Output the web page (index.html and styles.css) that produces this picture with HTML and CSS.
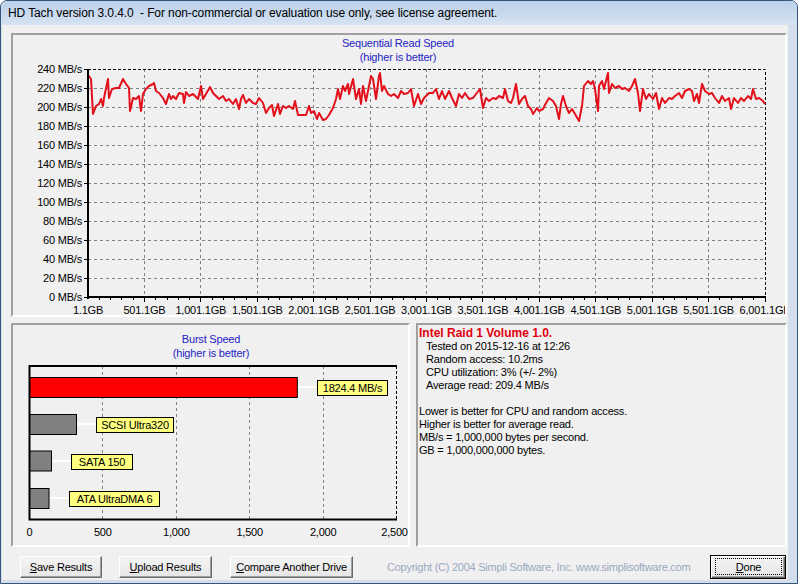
FILE: index.html
```html
<!DOCTYPE html>
<html>
<head>
<meta charset="utf-8">
<title>HD Tach</title>
<link rel="stylesheet" href="styles.css">
</head>
<body>
<div class="window">
  <div class="titlebar"><span class="title">HD Tach version 3.0.4.0&nbsp; - For non-commercial or evaluation use only, see license agreement.</span></div>
  <div class="frame">
    <div class="client">
      <div class="panel seq">
        <svg class="chart" width="772" height="280" viewBox="13 35 772 280">
          <text class="ttl" x="398" y="47" text-anchor="middle">Sequential Read Speed</text>
          <text class="ttl" x="398" y="61" text-anchor="middle">(higher is better)</text>
          <path class="grid" d="M88 88.5H765M88 107.5H765M88 126.5H765M88 145.5H765M88 164.5H765M88 183.5H765M88 202.5H765M88 221.5H765M88 240.5H765M88 259.5H765M88 278.5H765"/>
          <path class="grid" d="M144.5 69V297M200.5 69V297M257.5 69V297M313.5 69V297M370.5 69V297M426.5 69V297M482.5 69V297M539.5 69V297M595.5 69V297M652.5 69V297M708.5 69V297"/>
          <path class="edge" d="M88 69.5H765.5V297"/>
          <path class="tick" d="M84 69.5H88M84 88.5H88M84 107.5H88M84 126.5H88M84 145.5H88M84 164.5H88M84 183.5H88M84 202.5H88M84 221.5H88M84 240.5H88M84 259.5H88M84 278.5H88M84 297.5H88"/>
          <path class="tick" d="M144.5 297V302M200.5 297V302M257.5 297V302M313.5 297V302M370.5 297V302M426.5 297V302M482.5 297V302M539.5 297V302M595.5 297V302M652.5 297V302M708.5 297V302M765.5 297V302"/>
          <path class="tick" d="M99.5 297V300M110.5 297V300M121.5 297V300M133.5 297V300M155.5 297V300M167.5 297V300M178.5 297V300M189.5 297V300M212.5 297V300M223.5 297V300M234.5 297V300M246.5 297V300M268.5 297V300M279.5 297V300M291.5 297V300M302.5 297V300M325.5 297V300M336.5 297V300M347.5 297V300M358.5 297V300M381.5 297V300M392.5 297V300M403.5 297V300M415.5 297V300M437.5 297V300M449.5 297V300M460.5 297V300M471.5 297V300M494.5 297V300M505.5 297V300M516.5 297V300M528.5 297V300M550.5 297V300M561.5 297V300M573.5 297V300M584.5 297V300M607.5 297V300M618.5 297V300M629.5 297V300M640.5 297V300M663.5 297V300M674.5 297V300M686.5 297V300M697.5 297V300M719.5 297V300M731.5 297V300M742.5 297V300M753.5 297V300"/>
          <polyline class="read" points="88,75 91,79 93,114 96,106 99,104 101,99 103,106 104,98 108,79 109,98 112,89 116,88 119,88 123,79 126,84 129,88 130,111 133,98 136,99 139,96 141,111 143,94 146,89 149,86 153,84 154,83 156,91 159,93 163,98 166,104 169,94 171,99 173,96 176,99 179,93 183,94 184,103 186,92 189,96 193,94 198,99 201,86 203,99 206,94 210,87 213,93 216,96 219,99 223,96 226,101 229,99 233,104 236,99 239,109 241,99 243,95 246,103 249,99 253,103 256,104 259,98 263,103 266,113 269,108 272,105 274,116 278,104 280,114 283,106 286,108 289,106 293,109 295,101 298,115 303,115 306,115 309,106 311,113 314,111 317,119 319,113 323,120 326,119 329,115 333,108 336,99 338,89 340,99 343,86 345,91 348,84 349,94 353,79 356,99 359,89 361,104 363,86 366,101 369,86 371,76 373,79 376,99 379,76 380,73 382,91 384,86 388,94 391,96 394,94 398,98 401,91 404,94 408,93 411,89 414,106 418,94 421,104 424,98 429,93 433,93 436,89 439,99 442,91 445,99 449,91 452,98 456,106 459,94 462,98 465,93 469,99 473,98 476,94 480,89 483,108 486,98 489,101 493,98 496,99 499,96 503,98 505,89 508,101 511,103 513,98 516,84 519,104 522,99 525,96 528,106 531,109 533,114 537,108 539,111 543,109 546,103 549,98 553,101 556,106 559,119 561,104 563,96 566,106 569,113 572,109 575,114 579,121 582,106 584,86 588,81 591,84 593,81 595,89 598,111 599,86 602,81 604,89 608,73 609,93 612,84 615,88 619,86 622,89 625,88 629,91 632,86 635,79 638,93 640,111 643,89 646,99 649,94 653,99 656,93 659,109 662,98 665,103 669,98 672,99 675,96 679,93 682,98 685,91 689,89 692,91 694,101 697,94 699,103 702,84 705,91 709,94 712,93 715,98 719,103 722,96 725,101 729,98 731,109 734,98 738,103 741,98 744,101 748,96 751,99 753,89 756,99 759,98 763,101 765,104"/>
          <path class="axis" d="M88 69V299M87 297H766"/>
          <g text-anchor="end">
            <text x="82" y="73">240 MB/s</text>
            <text x="82" y="92">220 MB/s</text>
            <text x="82" y="111">200 MB/s</text>
            <text x="82" y="130">180 MB/s</text>
            <text x="82" y="149">160 MB/s</text>
            <text x="82" y="168">140 MB/s</text>
            <text x="82" y="187">120 MB/s</text>
            <text x="82" y="206">100 MB/s</text>
            <text x="82" y="225">80 MB/s</text>
            <text x="82" y="244">60 MB/s</text>
            <text x="82" y="263">40 MB/s</text>
            <text x="82" y="282">20 MB/s</text>
            <text x="82" y="301">0 MB/s</text>
          </g>
          <g text-anchor="middle">
            <text x="88" y="313.5">1.1GB</text>
            <text x="144.4" y="313.5">501.1GB</text>
            <text x="200.8" y="313.5">1,001.1GB</text>
            <text x="257.3" y="313.5">1,501.1GB</text>
            <text x="313.7" y="313.5">2,001.1GB</text>
            <text x="370.1" y="313.5">2,501.1GB</text>
            <text x="426.5" y="313.5">3,001.1GB</text>
            <text x="482.9" y="313.5">3,501.1GB</text>
            <text x="539.3" y="313.5">4,001.1GB</text>
            <text x="595.8" y="313.5">4,501.1GB</text>
            <text x="652.2" y="313.5">5,001.1GB</text>
            <text x="708.6" y="313.5">5,501.1GB</text>
            <text x="765" y="313.5">6,001.1GB</text>
          </g>
        </svg>
      </div>
      <div class="row">
        <div class="panel burst">
          <svg class="chart" width="395" height="220" viewBox="13 325 395 220">
            <text class="ttl" x="211" y="343" text-anchor="middle">Burst Speed</text>
            <text class="ttl" x="211" y="357" text-anchor="middle">(higher is better)</text>
            <path class="grid" d="M102.5 366V519M176.5 366V519M249.5 366V519M323.5 366V519"/>
            <path class="edge" d="M396.5 366V519"/>
            <path class="top" d="M29 366H397"/>
            <path class="link" d="M297 387H317M76.5 424H96.5M51.5 461H71.5M49 498H69.5"/>
            <rect class="bar-hi" x="29.5" y="377.5" width="267.8" height="20"/>
            <rect class="bar" x="29.5" y="414.5" width="47" height="20"/>
            <rect class="bar" x="29.5" y="451" width="22" height="20"/>
            <rect class="bar" x="29.5" y="488.5" width="19.5" height="20"/>
            <rect class="tag" x="317.5" y="380.5" width="70" height="15"/>
            <rect class="tag" x="96.5" y="417.5" width="77" height="15"/>
            <rect class="tag" x="71.5" y="454.5" width="61" height="15"/>
            <rect class="tag" x="69.5" y="491.5" width="90" height="15"/>
            <g text-anchor="middle">
              <text x="352.5" y="392">1824.4 MB/s</text>
              <text x="135" y="429">SCSI Ultra320</text>
              <text x="102" y="466">SATA 150</text>
              <text x="114.5" y="503">ATA UltraDMA 6</text>
            </g>
            <path class="axis" d="M29.5 365V520M28.5 519.5H397"/>
            <g text-anchor="middle">
              <text x="29.5" y="536">0</text>
              <text x="102.8" y="536">500</text>
              <text x="176.3" y="536">1,000</text>
              <text x="249.7" y="536">1,500</text>
              <text x="323.2" y="536">2,000</text>
              <text x="394.5" y="536">2,500</text>
            </g>
          </svg>
        </div>
        <div class="panel info">
          <div class="drive">Intel Raid 1 Volume 1.0.</div>
          <div class="ind">Tested on 2015-12-16 at 12:26</div>
          <div class="ind">Random access: 10.2ms</div>
          <div class="ind">CPU utilization: 3% (+/- 2%)</div>
          <div class="ind">Average read: 209.4 MB/s</div>
          <div class="blank"></div>
          <div>Lower is better for CPU and random access.</div>
          <div>Higher is better for average read.</div>
          <div>MB/s = 1,000,000 bytes per second.</div>
          <div>GB = 1,000,000,000 bytes.</div>
        </div>
      </div>
      <div class="buttons">
        <button class="btn b-save"><span><u>S</u>ave Results</span></button>
        <button class="btn b-upload"><span><u>U</u>pload Results</span></button>
        <button class="btn b-compare"><span><u>C</u>ompare Another Drive</span></button>
        <span class="copyright">Copyright (C) 2004 Simpli Software, Inc. www.simplisoftware.com</span>
        <button class="btn b-done"><span class="focus"><u>D</u>one</span></button>
      </div>
    </div>
  </div>
</div>
</body>
</html>
```
FILE: styles.css
```css
* { box-sizing: border-box; }
html, body { margin: 0; padding: 0; background: #ffffff; }

.window {
  width: 798px;
  height: 584px;
  display: flex;
  flex-direction: column;
  border: 1px solid #35557a;
  border-radius: 7px 7px 0 0;
  background: #d2deec;
  overflow: hidden;
}

.titlebar {
  height: 24px;
  flex: none;
  display: flex;
  align-items: center;
  padding-left: 7px;
  background: linear-gradient(#bad0ea, #c9daee 55%, #d6e3f2);
  font-family: "Liberation Sans", Arial, sans-serif;
  font-size: 12px;
  letter-spacing: -0.1px;
  color: #000;
  white-space: nowrap;
}

.frame {
  flex: 1;
  display: flex;
  padding: 0 9px 3px 1px;
}

.client {
  flex: 1;
  display: flex;
  flex-direction: column;
  background: #f0f0f0;
  padding: 8px 1px 0 9px;
}

.panel {
  border-style: solid;
  border-width: 2px;
  border-color: #a0a0a0 #ffffff #ffffff #a0a0a0;
  background: #f0f0f0;
}

.seq { height: 284px; flex: none; overflow: hidden; }

.chart { display: block; overflow: hidden; }
.chart text {
  font-family: "Liberation Sans", Arial, sans-serif;
  font-size: 11px;
  letter-spacing: -0.2px;
  fill: #000;
}
.chart .ttl { fill: #2424c4; }

.grid { fill: none; stroke: #808080; stroke-width: 1; stroke-dasharray: 3 3; }
.edge { fill: none; stroke: #000; stroke-width: 1; stroke-dasharray: 3 2; }
.tick { fill: none; stroke: #000; stroke-width: 1; }
.axis { fill: none; stroke: #000; stroke-width: 2; }
.top { fill: none; stroke: #000; stroke-width: 2; }
.read { fill: none; stroke: #e3101c; stroke-width: 2; stroke-linejoin: round; }
.link { fill: none; stroke: #ffffff; stroke-width: 2; }
.bar-hi { fill: #ff0000; stroke: #000; stroke-width: 1; }
.bar { fill: #808080; stroke: #000; stroke-width: 1; }
.tag { fill: #ffff80; stroke: #000; stroke-width: 1; }

.row {
  display: flex;
  flex: none;
  height: 224px;
  margin-top: 6px;
}

.burst { width: 399px; flex: none; overflow: hidden; }

.info {
  flex: 1;
  margin-left: 6px;
  padding: 2px 0 0 1px;
  font-family: "Liberation Sans", Arial, sans-serif;
  font-size: 11px;
  line-height: 13px;
  letter-spacing: -0.2px;
  color: #000;
  white-space: nowrap;
}
.drive { font-weight: bold; font-size: 12px; color: #e0000f; letter-spacing: 0; }
.ind { padding-left: 7px; }
.blank { height: 13px; }

.buttons {
  display: flex;
  align-items: center;
  flex: none;
  height: 24px;
  margin-top: 8px;
}

.btn {
  height: 22px;
  padding: 0;
  margin: 0;
  display: flex;
  align-items: center;
  justify-content: center;
  font-family: "Liberation Sans", Arial, sans-serif;
  font-size: 11px;
  letter-spacing: -0.2px;
  color: #000;
  background: linear-gradient(#f4f4f4, #e6e6e6);
  border: 1px solid;
  border-color: #ffffff #696969 #696969 #ffffff;
  box-shadow: inset -1px -1px 0 #a0a0a0;
  border-radius: 0;
}
.btn u { text-decoration: underline; }

.b-save { margin-left: 9px; width: 82px; }
.b-upload { margin-left: 17px; width: 93px; }
.b-compare { margin-left: 18px; width: 123px; }

.copyright {
  margin-left: 34px;
  font-family: "Liberation Sans", Arial, sans-serif;
  font-size: 11px;
  letter-spacing: -0.25px;
  color: #9ba8c2;
  white-space: nowrap;
}

.b-done {
  margin-left: auto;
  margin-right: 1px;
  width: 76px;
  height: 24px;
  border: 1px solid #000;
  box-shadow: inset 1px 1px 0 #ffffff, inset -1px -1px 0 #696969, inset -2px -2px 0 #a0a0a0;
  padding: 2px 3px 3px 4px;
  align-items: stretch;
}
.focus {
  flex: 1;
  display: flex;
  align-items: center;
  justify-content: center;
  border: 1px dotted #000;
}
```
